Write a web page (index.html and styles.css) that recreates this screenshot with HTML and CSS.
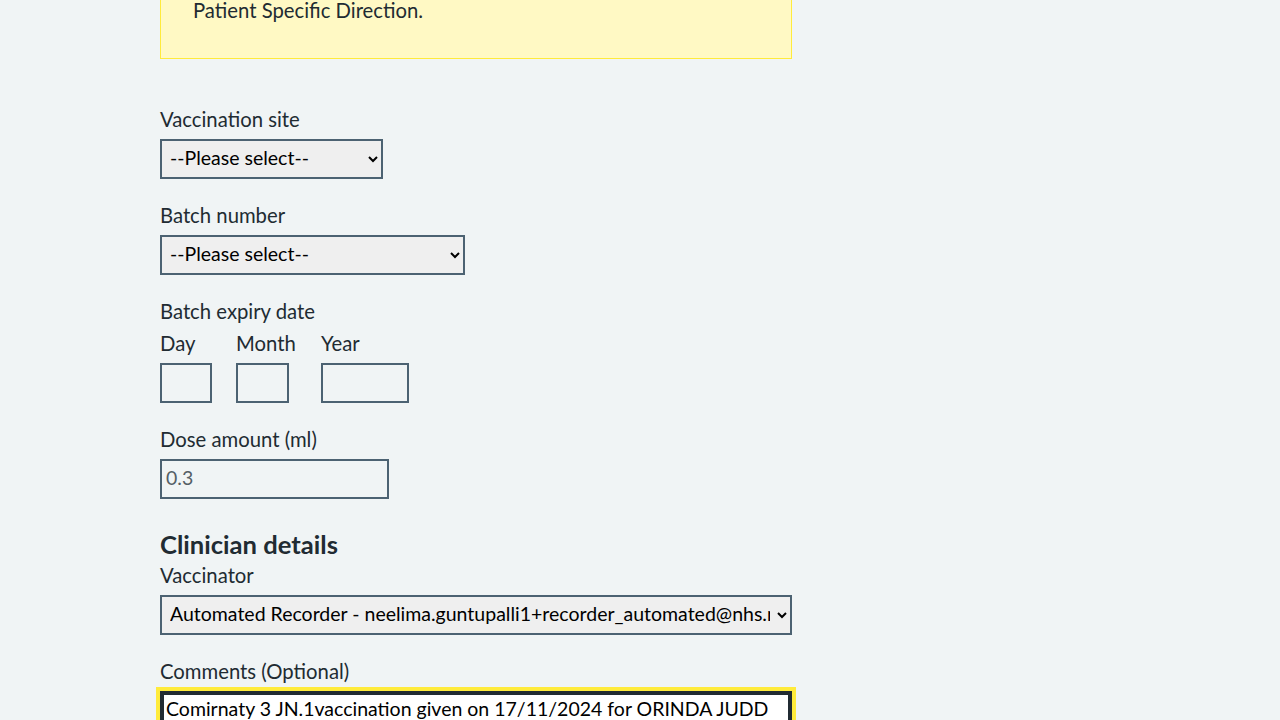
FILE: index.html
```html
<!DOCTYPE html>
<html lang="en">
<head>
<meta charset="utf-8">
<title>Record vaccination</title>
<link rel="stylesheet" href="styles.css">
</head>
<body>
<main class="container">
  <div class="callout">
    <p class="callout-text">Patient Specific Direction.</p>
  </div>

  <div class="form-group">
    <label class="label" for="site">Vaccination site</label>
    <select class="select select-site" id="site">
      <option>--Please select--</option>
    </select>
  </div>

  <div class="form-group">
    <label class="label" for="batch">Batch number</label>
    <select class="select select-batch" id="batch">
      <option>--Please select--</option>
    </select>
  </div>

  <fieldset class="form-group fieldset">
    <legend class="label legend">Batch expiry date</legend>
    <div class="date-row">
      <div class="date-item">
        <label class="label" for="day">Day</label>
        <input class="input input-day" id="day" type="text">
      </div>
      <div class="date-item date-item-month">
        <label class="label" for="month">Month</label>
        <input class="input input-month" id="month" type="text">
      </div>
      <div class="date-item">
        <label class="label" for="year">Year</label>
        <input class="input input-year" id="year" type="text">
      </div>
    </div>
  </fieldset>

  <div class="form-group">
    <label class="label" for="dose">Dose amount (ml)</label>
    <input class="input input-dose" id="dose" type="text" value="0.3" readonly>
  </div>

  <h2 class="heading">Clinician details</h2>
  <div class="form-group">
    <label class="label" for="vaccinator">Vaccinator</label>
    <select class="select select-full" id="vaccinator">
      <option>Automated Recorder - neelima.guntupalli1+recorder_automated@nhs.net</option>
    </select>
  </div>

  <div class="form-group">
    <label class="label" for="comments">Comments (Optional)</label>
    <textarea class="textarea" id="comments" rows="4">Comirnaty 3 JN.1vaccination given on 17/11/2024 for ORINDA JUDD</textarea>
  </div>
</main>
</body>
</html>
```

FILE: styles.css
```css
html, body {
  margin: 0;
  padding: 0;
  background: #f0f4f5;
}

body {
  font-family: "Lato", "Noto Sans", "Liberation Sans", sans-serif;
  color: #212b32;
  font-size: 20.3px;
  line-height: 24px;
  height: 720px;
  overflow: hidden;
}

.container {
  width: 632px;
  margin-left: 160px;
  display: flex;
  flex-direction: column;
  align-items: flex-start;
}

.callout {
  box-sizing: border-box;
  width: 632px;
  margin-top: -25px;
  margin-bottom: 48px;
  padding: 20px 32px 34px;
  background: #fff9c4;
  border: 1px solid #ffeb3b;
}

.callout-text {
  margin: 0;
  line-height: 28px;
}

.form-group {
  display: flex;
  flex-direction: column;
  align-items: flex-start;
  margin: 0 0 24px;
}

.fieldset {
  border: 0;
  padding: 0;
  min-width: 0;
}

.label {
  display: block;
  margin: 0 0 8px;
  line-height: 24px;
}

.legend {
  padding: 0;
}

.date-row {
  display: flex;
  gap: 24px;
}

.date-item {
  display: flex;
  flex-direction: column;
}

.date-item-month {
  min-width: 61px;
}

.select,
.input,
.textarea {
  box-sizing: border-box;
  height: 40px;
  border: 2px solid #4c6272;
  border-radius: 0;
  font-family: inherit;
  font-size: 19.5px;
  color: #000;
}

.select {
  background-color: #efefef;
  padding: 0 4px 4px 4px;
}

.select-site { width: 223px; }
.select-batch { width: 305px; }
.select-full { width: 632px; }

.input {
  background: transparent;
  padding: 0 4px 3px;
}

.input-day { width: 52px; }
.input-month { width: 53px; }
.input-year { width: 88px; }
.input-dose {
  width: 229px;
  color: #555f66;
}

.heading {
  margin: 5px 0 3px;
  font-size: 25.6px;
  line-height: 32px;
  font-weight: 700;
}

.textarea {
  width: 632px;
  height: 120px;
  background: #fff;
  border-color: #212b32;
  box-shadow: inset 0 0 0 2px #212b32;
  outline: 4px solid #ffeb3b;
  padding: 4px 4px;
  line-height: 24px;
  resize: none;
}
```
